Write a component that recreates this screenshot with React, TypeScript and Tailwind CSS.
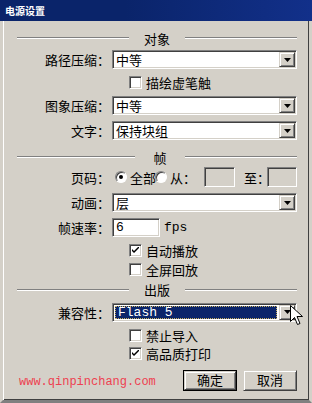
import React from "react";

const cjk = { fontFamily: '"Noto Sans CJK SC", "Noto Sans", sans-serif' };
const mono = { fontFamily: '"Liberation Mono", "DejaVu Sans Mono", monospace' };

// sunken white field, classic win2000 look
const sunken =
  "border border-t-[#808080] border-l-[#808080] border-r-white border-b-white shadow-[inset_1px_1px_#404040,inset_-1px_-1px_#d4d0c8]";
const raised =
  "border border-t-[#d4d0c8] border-l-[#d4d0c8] border-r-[#404040] border-b-[#404040] shadow-[inset_1px_1px_#fff,inset_-1px_-1px_#808080]";

const Arrow = () => (
  <svg width="7" height="4" viewBox="0 0 7 4">
    <path d="M0 0h7L3.5 4z" fill="#000" />
  </svg>
);

const Select = ({ value, focused }: { value: string; focused?: boolean }) => (
  <div className={`flex h-[19px] w-full items-stretch bg-white ${sunken}`}>
    <div className="flex flex-1 items-center p-[2px]">
      {focused ? (
        <div
          className="flex h-full w-full items-center border border-dotted border-[#c8b060] bg-[#0a246a] pl-[2px] text-[13px] leading-none text-white"
          style={mono}
        >
          {value}
        </div>
      ) : (
        <span className="pl-[1px] text-[13px] leading-none text-black">{value}</span>
      )}
    </div>
    <div className={`my-[1px] mr-[1px] flex w-[16px] items-center justify-center bg-[#d4d0c8] ${raised}`}>
      <Arrow />
    </div>
  </div>
);

const Check = ({ checked, label, className = "" }: { checked?: boolean; label: string; className?: string }) => (
  <div className={`ml-[112px] flex h-[13px] items-center ${className}`}>
    <div className={`flex h-[13px] w-[13px] items-center justify-center bg-white ${sunken}`}>
      {checked && (
        <svg width="7" height="7" viewBox="0 0 7 7">
          <path d="M0 2v2l2 2 5-5V-1L2 4z" fill="#000" />
        </svg>
      )}
    </div>
    <span className="ml-[4px] text-[13px] leading-none">{label}</span>
  </div>
);

const Radio = ({ checked }: { checked?: boolean }) => (
  <div className="relative flex h-[12px] w-[12px] items-center justify-center rounded-full border border-t-[#808080] border-l-[#808080] border-r-white border-b-white bg-white shadow-[inset_1px_1px_#404040]">
    {checked && <div className="h-[4px] w-[4px] rounded-full bg-black" />}
  </div>
);

const Header = ({ title, left, className = "" }: { title: string; left: number; className?: string }) => (
  <div className={`flex h-[16px] items-center ${className}`}>
    <div className="h-[2px] border-t border-b border-t-[#808080] border-b-white" style={{ width: left }} />
    <span className="flex-1 text-center text-[13px] leading-none">{title}</span>
    <div className="h-[2px] w-[112px] border-t border-b border-t-[#808080] border-b-white" />
  </div>
);

const Row = ({ label, children, className = "" }: { label: string; children: React.ReactNode; className?: string }) => (
  <div className={`grid grid-cols-[93px_1fr] items-center gap-[2px] ${className}`}>
    <span className="text-right text-[13px] leading-none">{label}</span>
    {children}
  </div>
);

export default function App() {
  return (
    <div
      className="relative flex h-[403px] w-[312px] flex-col bg-[#d4d0c8] text-black"
      style={cjk}
    >
      <div className="flex h-[21px] items-center bg-[linear-gradient(to_right,#0a246a,#0a246a_40%,#12308a)] pl-[5px] text-[10px] font-bold text-white">
        电源设置
      </div>
      <div className="flex flex-1 flex-col border-x-[3px] border-b-[3px] border-x-[#d4d0c8] border-b-[#808080] pl-[14px] pr-[12px] shadow-[inset_1px_0_#fff,inset_-1px_-1px_#404040]">
        <Header title="对象" left={112} className="mt-[9px]" />
        <Row label="路径压缩：" className="mt-[4px]">
          <Select value="中等" />
        </Row>
        <Check label="描绘虚笔触" className="mt-[7px]" />
        <Row label="图象压缩：" className="mt-[7px]">
          <Select value="中等" />
        </Row>
        <Row label="文字：" className="mt-[6px]">
          <Select value="保持块组" />
        </Row>

        <Header title="帧" left={118} className="mt-[9px]" />
        <Row label="页码：" className="mt-[2px]">
          <div className="flex h-[20px] items-center">
            <div className="ml-[3px]">
              <Radio checked />
            </div>
            <span className="ml-[3px] text-[13px] leading-none">全部</span>
            <div className="-ml-[1px]">
              <Radio />
            </div>
            <span className="ml-[3px] text-[13px] leading-none">从：</span>
            <div className={`ml-[8px] h-[20px] w-[31px] ${sunken} border-r-[#d4d0c8] border-b-[#d4d0c8] shadow-[inset_1px_1px_#404040]`} />
            <span className="ml-[9px] text-[13px] leading-none">至：</span>
            <div className={`ml-[-3px] h-[20px] w-[30px] ${sunken} border-r-[#d4d0c8] border-b-[#d4d0c8] shadow-[inset_1px_1px_#404040]`} />
          </div>
        </Row>
        <Row label="动画：" className="mt-[6px]">
          <Select value="层" />
        </Row>
        <Row label="帧速率：" className="mt-[6px]">
          <div className="flex items-center">
            <div className={`flex h-[19px] w-[48px] items-center bg-white pl-[3px] text-[13px] ${sunken}`} style={mono}>
              6
            </div>
            <span className="ml-[4px] text-[13px]" style={mono}>
              fps
            </span>
          </div>
        </Row>
        <Check checked label="自动播放" className="mt-[6px]" />
        <Check label="全屏回放" className="mt-[6px]" />

        <Header title="出版" left={112} className="mt-[6px]" />
        <Row label="兼容性：" className="mt-[5px]">
          <Select value="Flash 5" focused />
        </Row>
        <Check label="禁止导入" className="mt-[7px]" />
        <Check checked label="高品质打印" className="mt-[5px]" />

        <div className="mt-[10px] flex h-[21px] items-center">
          <span className="ml-[2px] pt-[3px] text-[12px] text-[#ee4050]" style={mono}>
            www.qinpinchang.com
          </span>
          <div className="ml-auto flex gap-[6px]">
            <div className="border border-black">
              <div className={`flex h-[19px] w-[52px] items-center justify-center bg-[#d4d0c8] text-[13px] ${raised}`}>
                确定
              </div>
            </div>
            <div className={`flex h-[21px] w-[54px] items-center justify-center bg-[#d4d0c8] text-[13px] ${raised}`}>
              取消
            </div>
          </div>
        </div>
      </div>

      <svg className="absolute left-[290px] top-[305px]" width="13" height="21" viewBox="0 0 13 21">
        <path d="M0.5 0.5v16l4-4 3 7 2.5-1-3-7h5.5z" fill="#fff" stroke="#000" strokeWidth="1" />
      </svg>
    </div>
  );
}
